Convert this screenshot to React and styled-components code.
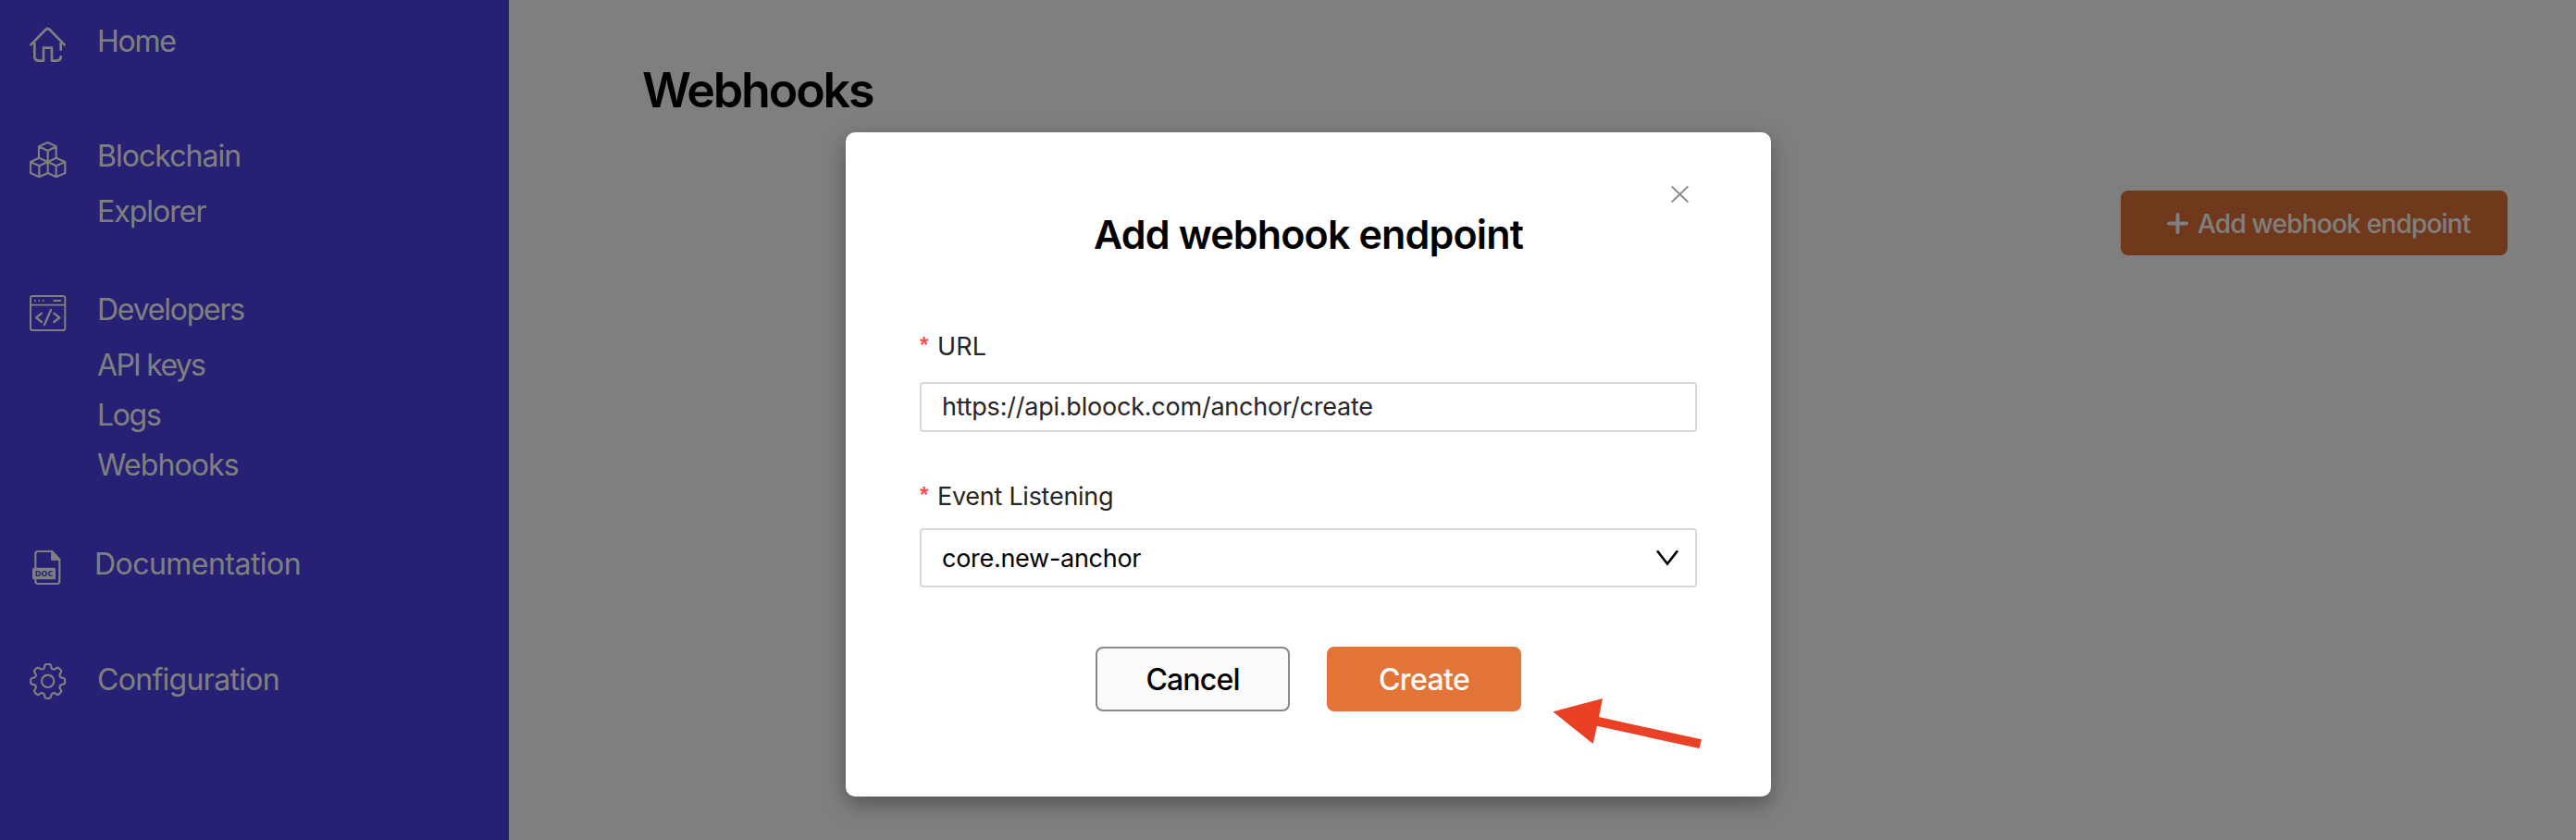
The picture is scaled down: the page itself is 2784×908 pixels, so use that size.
import React from "react";
import styled, { createGlobalStyle } from "styled-components";

const GlobalStyle = createGlobalStyle`
  *, *::before, *::after { box-sizing: border-box; }
  body {
    margin: 0;
    font-family: Inter, "Liberation Sans", sans-serif;
    overflow: hidden;
  }
`;

const Page = styled.div`
  position: relative;
  display: flex;
  height: 908px;
  background: #fff;
`;

/* Sidebar */
const Sidebar = styled.nav`
  flex: 0 0 550px;
  padding: 18px 0 0 32px;
  background: #4c42ea;
  color: #fff;
`;

const NavGroup = styled.section`
  display: flex;
  gap: 33px;
  margin-top: ${(p) => p.$gap || 0}px;
`;

const NavIcon = styled.svg`
  flex: none;
  width: 40px;
  height: 40px;
  margin-top: ${(p) => p.$top || 10}px;
  fill: none;
  stroke: currentColor;
  stroke-linecap: round;
  stroke-linejoin: round;
`;

const NavLinks = styled.div`
  display: flex;
  flex-direction: column;
  margin-left: ${(p) => p.$shift || 0}px;
`;

const NavLink = styled.a`
  font-size: 32px;
  line-height: 54px;
  letter-spacing: ${(p) => p.$tracking}px;
  white-space: nowrap;
`;

const NavHeading = styled(NavLink)`
  &:not(:last-child) { margin-bottom: 6px; }
`;

/* Main area */
const Main = styled.main`
  flex: 1;
  display: flex;
  flex-direction: column;
  padding: 66px 74px 0 144px;
`;

const PageTitle = styled.h1`
  margin: 0 0 76px;
  font-size: 52px;
  line-height: 64px;
  font-weight: 600;
  letter-spacing: -2.2px;
  color: #000;
`;

const AddButton = styled.button`
  align-self: flex-end;
  display: flex;
  align-items: center;
  gap: 10px;
  width: 418px;
  height: 70px;
  padding: 0 0 0 50px;
  border: 0;
  border-radius: 8px;
  background: #e27238;
  color: #fff;
  font: 500 28px/34px Inter, sans-serif;
  letter-spacing: -0.78px;
  white-space: nowrap;
`;

const AddLabel = styled.span`
  padding-top: 2px;
`;

/* Dialog */
const Backdrop = styled.div`
  position: absolute;
  inset: 0;
  display: flex;
  justify-content: center;
  align-items: flex-start;
  padding: 143px 0 0 44px;
  background: rgba(0, 0, 0, 0.5);
`;

const Dialog = styled.div`
  position: relative;
  display: flex;
  flex-direction: column;
  width: 1000px;
  height: 718px;
  padding: 58px 80px 0;
  border-radius: 10px;
  background: #fff;
  box-shadow: 0 8px 22px rgba(0, 0, 0, 0.34);
`;

const CloseButton = styled.button`
  align-self: flex-end;
  width: 19px;
  height: 18px;
  margin-right: 9px;
  padding: 0;
  border: 0;
  background: none;
  color: #8c8c8c;
  svg { display: block; }
`;

const DialogTitle = styled.h2`
  margin: 8px 0 79px;
  font-size: 43px;
  line-height: 52px;
  font-weight: 600;
  letter-spacing: -0.86px;
  text-align: center;
  color: #000;
`;

const Label = styled.label`
  display: flex;
  font-size: 27px;
  line-height: 34px;
  letter-spacing: ${(p) => p.$tracking}px;
  color: #262626;
`;

const Required = styled.span`
  width: 19px;
  margin-top: 3px;
  font: 700 24px/24px "Liberation Sans", sans-serif;
  color: #ff4d4f;
`;

const Field = styled.div`
  flex: none;
  display: flex;
  align-items: center;
  justify-content: space-between;
  height: ${(p) => p.$height}px;
  margin: ${(p) => p.$margin};
  padding: 0 18px ${(p) => p.$lift || 0}px 22px;
  border: 2px solid #d9d9d9;
  border-radius: 4px;
  font-size: 27px;
  letter-spacing: ${(p) => p.$tracking}px;
  color: ${(p) => p.$color};
`;

const Actions = styled.div`
  display: flex;
  justify-content: center;
  gap: 40px;
`;

const ActionButton = styled.button`
  width: 210px;
  height: 70px;
  padding: 2px 0 0;
  border: 2px solid ${(p) => (p.$primary ? "#e37438" : "#888")};
  border-radius: 8px;
  background: ${(p) => (p.$primary ? "#e37438" : "#fbfbfb")};
  color: ${(p) => (p.$primary ? "#fff" : "#000")};
  font: 500 32px/38px Inter, sans-serif;
  letter-spacing: ${(p) => p.$tracking}px;
`;

const Pointer = styled.svg`
  position: absolute;
  left: 764px;
  top: 612px;
`;

const gearPath =
  Array.from({ length: 160 }, (_, i) => {
    const a = (i / 160) * Math.PI * 2;
    const r = 49 + 6.5 * Math.tanh(2.4 * Math.cos(8 * a) + 0.4);
    return `${i ? "L" : "M"}${(60 + r * Math.cos(a)).toFixed(2)} ${(60 + r * Math.sin(a)).toFixed(2)}`;
  }).join("") + "Z";

const HomeIcon = () => (
  <NavIcon viewBox="36 24 120 120" strokeWidth="8">
    <path d="M40 85 88 36Q94.500 30 101 36L149 85M52 78V123Q52 137 66 137H81V95H108V137H124Q137 137 137 124M137 78V101" />
  </NavIcon>
);

const BlocksIcon = () => (
  <NavIcon viewBox="36 396 120 120" strokeWidth="6.500">
    <path d="M66 450V415L95 402 122 415V450M66 415 95 429 122 415M95 429V465M67 452 95 465V501L67 514 39 501V465ZM39 465 67 478 95 465M67 478V514M122 452 151 465V501L122 514 95 501V465ZM95 465 122 478 151 465M122 478V514" />
  </NavIcon>
);

const CodeIcon = () => (
  <NavIcon viewBox="36 24 120 120" strokeWidth="7">
    <rect x="39" y="30" width="112" height="111" rx="7" strokeWidth="6" />
    <path d="M39 59H151" strokeWidth="5" strokeLinecap="butt" />
    <path d="M54 45h.1M67 45h.1M80 45h.1M115 45H136" strokeWidth="6.500" />
    <path d="M75 86 57 100 75 114M115 86 133 100 115 114M105 75 84 124" />
  </NavIcon>
);

const DocIcon = () => (
  <NavIcon viewBox="36 24 120 120" strokeWidth="6.500">
    <path d="M55 86V41Q55 33 63 33H109L133 59V130Q133 138 125 138H63Q55 138 55 130V125" />
    <path d="M107 33V61H133Z" fill="currentColor" strokeWidth="3" />
    <rect x="45" y="86" width="75" height="38" rx="5" fill="currentColor" stroke="none" />
    <text x="53" y="113" textLength="59" lengthAdjust="spacingAndGlyphs" fontFamily="Open Sans, sans-serif" fontSize="25" fontWeight="700" fill="#4c42ea" stroke="none">
      DOC
    </text>
  </NavIcon>
);

const GearIcon = () => (
  <NavIcon $top={9} viewBox="1 2 120 120" strokeWidth="6.500">
    <path d={gearPath} />
    <circle cx="60" cy="60" r="20" />
  </NavIcon>
);

export default function App() {
  return (
    <>
      <GlobalStyle />
      <Page>
        <Sidebar>
          <NavGroup>
            <HomeIcon />
            <NavLinks>
              <NavHeading $tracking={-1.23}>Home</NavHeading>
            </NavLinks>
          </NavGroup>
          <NavGroup $gap={70}>
            <BlocksIcon />
            <NavLinks>
              <NavHeading $tracking={-0.97}>Blockchain</NavHeading>
              <NavLink $tracking={-0.99}>Explorer</NavLink>
            </NavLinks>
          </NavGroup>
          <NavGroup $gap={52}>
            <CodeIcon />
            <NavLinks>
              <NavHeading $tracking={-1.24}>Developers</NavHeading>
              <NavLink $tracking={-1.7}>API keys</NavLink>
              <NavLink $tracking={-1.34}>Logs</NavLink>
              <NavLink $tracking={-0.9}>Webhooks</NavLink>
            </NavLinks>
          </NavGroup>
          <NavGroup $gap={53}>
            <DocIcon />
            <NavLinks $shift={-3}>
              <NavHeading $tracking={-0.53}>Documentation</NavHeading>
            </NavLinks>
          </NavGroup>
          <NavGroup $gap={71}>
            <GearIcon />
            <NavLinks>
              <NavHeading $tracking={-0.69}>Configuration</NavHeading>
            </NavLinks>
          </NavGroup>
        </Sidebar>

        <Main>
          <PageTitle>Webhooks</PageTitle>
          <AddButton>
            <svg width="23" height="23" viewBox="0 0 23 23" fill="none" stroke="currentColor" strokeWidth="4" strokeLinecap="round">
              <path d="M11.500 2V21M2 11.500H21" />
            </svg>
            <AddLabel>Add webhook endpoint</AddLabel>
          </AddButton>
        </Main>

        <Backdrop>
          <Dialog role="dialog">
            <CloseButton aria-label="Close">
              <svg width="19" height="18" viewBox="0 0 19 18" fill="none" stroke="currentColor" strokeWidth="2">
                <path d="M.7.500 18.300 17.500M18.300.500.7 17.500" />
              </svg>
            </CloseButton>
            <DialogTitle>Add webhook endpoint</DialogTitle>

            <Label $tracking={0.12}>
              <Required>*</Required>URL
            </Label>
            <Field $height={54} $margin="21px 0 53px" $lift={2} $tracking={-0.22} $color="#262626">
              https://api.bloock.com/anchor/create
            </Field>

            <Label $tracking={-0.27}>
              <Required>*</Required>Event Listening
            </Label>
            <Field $height={64} $margin="17px 0 64px" $tracking={-0.28} $color="#000">
              core.new-anchor
              <svg width="24" height="17" viewBox="0 0 24 17" fill="none" stroke="currentColor" strokeWidth="2.600">
                <path d="M1 .3 12 14.500 23 .3" />
              </svg>
            </Field>

            <Actions>
              <ActionButton $tracking={-0.83}>Cancel</ActionButton>
              <ActionButton $primary $tracking={-0.62}>Create</ActionButton>
            </Actions>

            <Pointer width="162" height="55" viewBox="0 0 162 55">
              <path d="M.3 14.300 54 0 50 20 161 44.300 158.500 54 48 29.700 43.600 49Z" fill="#ea4025" />
            </Pointer>
          </Dialog>
        </Backdrop>
      </Page>
    </>
  );
}
